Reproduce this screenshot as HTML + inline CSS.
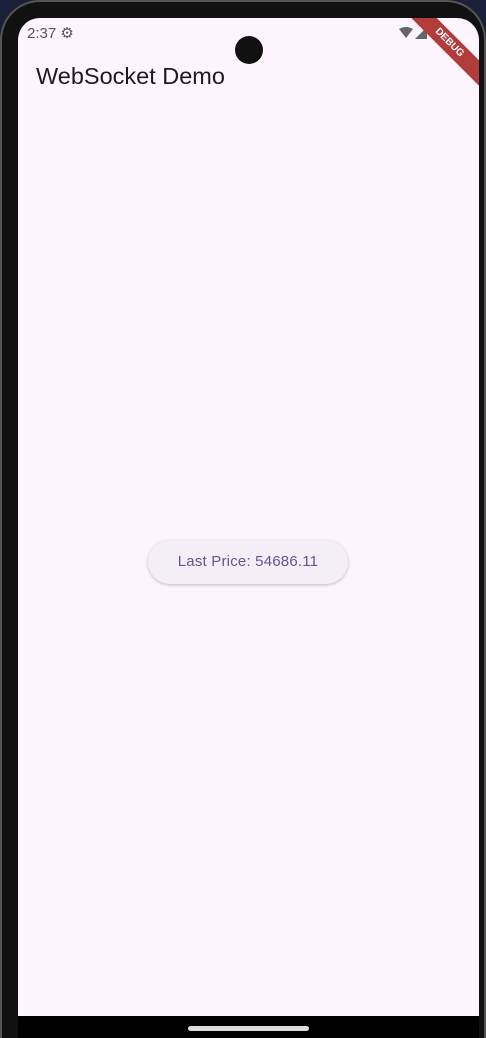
<!DOCTYPE html>
<html><head><style>
html,body{margin:0;width:486px;height:1038px;overflow:hidden}
body{background:#1a1f3a;position:relative;font-family:"Liberation Sans",sans-serif}
.phone{position:absolute;left:0;top:0;width:486px;height:1038px;background:#111;border-radius:40px 40px 0 0;border:2px solid #555;border-bottom:none;box-sizing:border-box}
.screen{position:absolute;left:18px;top:18px;width:461px;height:998px;background:#fcf5fd;border-radius:22px 22px 0 0;overflow:hidden}
.nav{position:absolute;left:18px;top:1016px;width:461px;height:22px;background:#000}
.bar{position:absolute;left:188px;top:1026px;width:121px;height:5px;border-radius:3px;background:#ddd}
.time{position:absolute;left:9px;top:6px;font-size:15px;color:#555}
.title{position:absolute;left:18px;top:45px;font-size:23.5px;color:#1d1b20}
.cam{position:absolute;left:235px;top:36px;width:28px;height:28px;border-radius:50%;background:#111}
.btn{position:absolute;left:130px;top:522px;width:200px;height:44px;border-radius:22px;background:#f4eef7;box-shadow:0 1px 3px rgba(0,0,0,.25);color:#65558f;font-size:15px;font-weight:500;text-align:center;line-height:44px;letter-spacing:0.2px}
.debug{position:absolute;right:-30px;top:16px;width:120px;height:18px;background:#b23b3b;color:#fff;font-size:10px;font-weight:bold;text-align:center;line-height:18px;transform:rotate(45deg)}
</style></head><body>
<div class="phone"></div>
<div class="screen">
<div class="time">2:37 <span style="font-size:15px">⚙</span></div>
<svg style="position:absolute;left:381px;top:9px" width="30" height="12"><path d="M0 2 Q7 -2 14 2 L7 11Z" fill="#666"/><path d="M28 0 L28 12 L16 12Z" fill="#666"/></svg>
<div class="title">WebSocket Demo</div>
<div class="btn">Last Price: 54686.11</div>
<div class="debug">DEBUG</div>
</div>
<div class="cam"></div>
<div class="nav"></div>
<div class="bar"></div>
</body></html>
